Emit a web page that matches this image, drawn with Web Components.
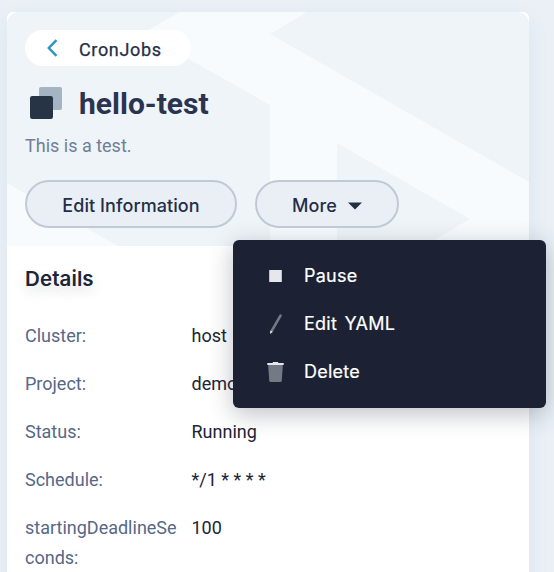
<!DOCTYPE html>
<html lang="en">
<head>
<meta charset="utf-8">
<title>CronJobs</title>
<style>
html, body { margin: 0; height: 572px; overflow: hidden; }
body { font-family: Roboto, "Liberation Sans", sans-serif; background: #eaf0f6; color: #242e42; }
</style>
</head>
<body>
<cron-page></cron-page>
<script>
const define = (name, html) => {
  const template = document.createElement('template');
  template.innerHTML = html;
  customElements.define(name, class extends HTMLElement {
    constructor() {
      super();
      this.attachShadow({ mode: 'open' }).append(template.content.cloneNode(true));
    }
  });
};

define('back-link', `
<style>
:host { display: flex; align-items: center; box-sizing: border-box; width: 166px; height: 36px; padding-left: 20px; border-radius: 18px; background: #fff; color: #242e48; font-size: 18px; line-height: 36px; }
svg { flex: none; width: 16px; height: 20px; margin-right: 18px; }
span { -webkit-text-stroke: .25px; letter-spacing: .65px; padding-top: 3px; }
</style>
<svg viewBox="0 0 16 20"><path d="M11.5 2.2 3.8 10l7.7 7.8" fill="none" stroke="#2b93cb" stroke-width="2.4"/></svg>
<span><slot></slot></span>`);

define('resource-title', `
<style>
:host { display: flex; align-items: center; height: 48px; margin-top: 13px; }
svg { flex: none; width: 36px; height: 36px; margin: 0 14px 0 4px; }
span { font-size: 30px; line-height: 48px; font-weight: 700; color: #2a3350; padding-top: 2px; }
</style>
<svg viewBox="0 0 36 36"><rect x="10" y="2" width="23" height="23" rx="2" fill="#a5b4c2"/><rect x="1" y="11" width="23" height="23" rx="2.2" fill="#273446"/></svg>
<span><slot></slot></span>`);

define('pill-button', `
<style>
:host { display: flex; justify-content: center; align-items: center; gap: 11px; box-sizing: border-box; height: 48px; border: 2px solid #c0c9d4; border-radius: 24px; background: #eaeff6; color: #242e48; font: 500 18px/30px Inter, sans-serif; letter-spacing: .08px; padding-top: 3px; }
</style>
<slot></slot><slot name="icon"></slot>`);

define('detail-row', `
<style>
:host { display: grid; grid-template-columns: 152px 1fr; column-gap: 14.5px; font-size: 18px; line-height: 30px; margin-bottom: 18px; }
.label { color: #566886; overflow-wrap: anywhere; }
.value { color: #1c2436; white-space: nowrap; }
</style>
<div class="label"><slot name="label"></slot></div><div class="value"><slot></slot></div>`);

define('menu-item', `
<style>
:host { display: flex; align-items: center; height: 48px; padding-left: 31px; color: #fff; font: 400 18px Inter, sans-serif; letter-spacing: .25px; word-spacing: 2px; }
::slotted(svg) { width: 24px; height: 24px; flex: none; margin-right: 16px; }
span { line-height: 48px; -webkit-text-stroke: .2px; }
</style>
<slot name="icon"></slot><span><slot></slot></span>`);

define('drop-menu', `
<style>
:host { display: block; box-sizing: border-box; width: 313px; height: 168px; padding: 12px 0; border-radius: 6px; background: #1c2233; box-shadow: 0 6px 24px rgba(36,46,66,.3); }
</style>
<slot></slot>`);

define('card-hero', `
<style>
:host { display: grid; height: 234px; background: #eff4f8; border-radius: 12px 12px 0 0; overflow: hidden; }
:host > * { grid-area: 1 / 1; }
.body { padding: 18px 18px 0; z-index: 1; }
.desc { font-size: 18px; line-height: 30px; color: #707f97; margin-top: 4px; }
.actions { display: flex; gap: 18px; margin-top: 19px; }
.edit { width: 212px; }
.more { width: 144px; }
</style>
<svg width="522" height="234" viewBox="7 12 522 234"><path fill="#f7fbfe" d="M180 12h127l-37 22 259 148v64H424l46-27-133-76v103h-67V105L143 33zM7 183v63h111z"/></svg>
<div class="body">
  <back-link>CronJobs</back-link>
  <resource-title>hello-test</resource-title>
  <div class="desc">This is a test.</div>
  <div class="actions">
    <pill-button class="edit">Edit Information</pill-button>
    <pill-button class="more">More<svg slot="icon" width="14" height="8" viewBox="0 0 14 8"><path d="M0 .5h14L7 7.5z" fill="#242e42"/></svg></pill-button>
  </div>
</div>`);

define('cron-page', `
<style>
:host { display: block; box-sizing: border-box; position: relative; width: 554px; height: 572px; padding: 12px 25px 0 7px; overflow: hidden; }
.card { height: 620px; background: #fff; border-radius: 6px; box-shadow: 0 6px 24px rgba(36,46,96,.05); }
h3 { margin: 0 18px; padding-top: 18px; font: 600 20.5px/30px Inter, sans-serif; letter-spacing: .1px; color: #1c2436; text-shadow: 0 6px 12px rgba(36,46,66,.15); }
.rows { padding: 27px 18px 0; }
drop-menu { position: absolute; left: 233px; top: 240px; }
</style>
<div class="card">
  <card-hero></card-hero>
  <h3>Details</h3>
  <div class="rows">
    <detail-row><span slot="label">Cluster:</span>host</detail-row>
    <detail-row><span slot="label">Project:</span>demo</detail-row>
    <detail-row><span slot="label">Status:</span>Running</detail-row>
    <detail-row><span slot="label">Schedule:</span>*/1 * * * *</detail-row>
    <detail-row><span slot="label">startingDeadlineSeconds:</span>100</detail-row>
  </div>
</div>
<drop-menu>
  <menu-item><svg slot="icon" viewBox="0 0 24 24"><path fill="#e6e7ea" d="M5.2 6h12.6v12H5.2z"/></svg>Pause</menu-item>
  <menu-item><svg slot="icon" viewBox="0 0 24 24"><path d="M16.5 3.6 8 18.3" stroke="#737985" stroke-width="2.6" stroke-linecap="round"/><path fill="#e6e7ea" d="m6.2 18.5 2.7 1.3-2.7 2.2z"/></svg>Edit YAML</menu-item>
  <menu-item><svg slot="icon" viewBox="0 0 24 24"><path fill="#737985" d="M4.2 5h14.6l-1 15.5q-.1 1.5-1.5 1.5H6.7q-1.4 0-1.5-1.5z"/><path fill="#e6e7ea" d="M3.3 3h5.5v-1h5.4v1h5.5v2H3.3z"/></svg>Delete</menu-item>
</drop-menu>`);
</script>
</body>
</html>
